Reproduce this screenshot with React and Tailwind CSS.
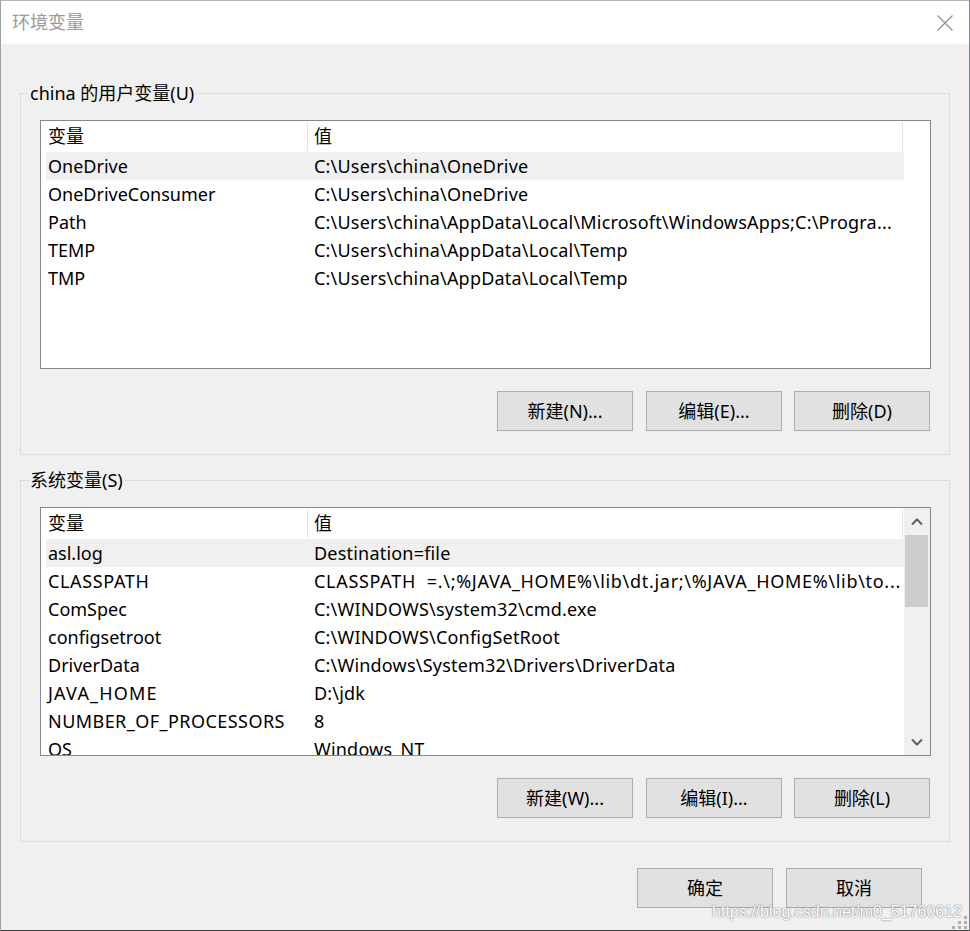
import React from 'react';

// [name, value, name tracking, value tracking]
const userVars = [
  ['OneDrive', 'C:\\Users\\china\\OneDrive'],
  ['OneDriveConsumer', 'C:\\Users\\china\\OneDrive'],
  ['Path', 'C:\\Users\\china\\AppData\\Local\\Microsoft\\WindowsApps;C:\\Progra...'],
  ['TEMP', 'C:\\Users\\china\\AppData\\Local\\Temp'],
  ['TMP', 'C:\\Users\\china\\AppData\\Local\\Temp'],
];

const sysVars = [
  ['asl.log', 'Destination=file'],
  ['CLASSPATH', 'CLASSPATH  =.\\;%JAVA_HOME%\\lib\\dt.jar;\\%JAVA_HOME%\\lib\\to...', 'tracking-[0.65px]', 'tracking-[0.7px]'],
  ['ComSpec', 'C:\\WINDOWS\\system32\\cmd.exe'],
  ['configsetroot', 'C:\\WINDOWS\\ConfigSetRoot'],
  ['DriverData', 'C:\\Windows\\System32\\Drivers\\DriverData'],
  ['JAVA_HOME', 'D:\\jdk', 'tracking-[1.2px]'],
  ['NUMBER_OF_PROCESSORS', '8', 'tracking-[0.45px]'],
  ['OS', 'Windows_NT'],
];

const Chevron = ({ down }) => (
  <svg width="12" height="8" viewBox="0 0 12 8" className="block">
    <path
      d={down ? 'M1 1.5 L6 6.5 L11 1.5' : 'M1 6.5 L6 1.5 L11 6.5'}
      fill="none"
      stroke="#606060"
      strokeWidth="2"
    />
  </svg>
);

const Button = ({ children, className = '' }) => (
  <button className={`w-[136px] h-[40px] border border-[#adadad] bg-[#e1e1e1] text-[18px] text-black ${className}`}>
    {children}
  </button>
);

const VarList = ({ rows, scroll }) => (
  <div className="h-[249px] border border-[#828790] bg-white flex overflow-hidden">
    <div className="w-[863px] shrink-0">
      {/* header */}
      <div className="flex h-[31px]">
        <div className="w-[266px] pl-[7px] flex items-center">变量</div>
        <div className="w-[1px] bg-[#e5e5e5] my-[1px]" />
        <div className="w-[594px] pl-[6px] flex items-center">值</div>
        <div className="w-[1px] bg-[#e5e5e5] my-[1px]" />
      </div>
      {rows.map(([name, value, nameTrack = '', valueTrack = 'tracking-[0.2px]'], i) => (
        <div
          key={name}
          className={`ml-[5px] w-[858px] h-[28px] flex items-center ${i === 0 ? 'bg-[#f0f0f0]' : ''}`}
        >
          <div className={`w-[268px] pl-[2px] whitespace-pre ${nameTrack}`}>{name}</div>
          <div className={`whitespace-pre ${valueTrack}`}>{value}</div>
        </div>
      ))}
    </div>
    {scroll ? (
      <div className="w-[26px] shrink-0 bg-[#f0f0f0] flex flex-col">
        <div className="h-[27px] flex items-center justify-center">
          <Chevron />
        </div>
        <div className="h-[72px] ml-[1px] w-[23px] bg-[#cdcdcd]" />
        <div className="flex-1" />
        <div className="h-[27px] flex items-center justify-center">
          <Chevron down />
        </div>
      </div>
    ) : (
      <div className="w-[26px] shrink-0" />
    )}
  </div>
);

const Group = ({ label, rows, scroll, buttons, className = '' }) => (
  <div className={`relative mx-[19px] border border-[#dcdcdc] pt-[26px] pl-[19px] pr-[18px] pb-[23px] ${className}`}>
    <span className="absolute left-[8px] top-[-13px] bg-[#f0f0f0] px-[1px] leading-[24px]">{label}</span>
    <VarList rows={rows} scroll={scroll} />
    <div className="mt-[22px] flex justify-end pr-[1px]">
      <Button className="mr-[13px]">{buttons[0]}</Button>
      <Button className="mr-[12px]">{buttons[1]}</Button>
      <Button>{buttons[2]}</Button>
    </div>
  </div>
);

export default function App() {
  return (
    <div className="relative w-[970px] h-[931px] flex flex-col border border-t-[#b4b4b4] border-l-[#a0a0a0] border-r-[#7f848b] border-b-[#3c3c3c] bg-[#f0f0f0] text-black text-[18px] font-['Noto_Sans','Noto_Sans_CJK_SC',sans-serif] overflow-hidden">
      {/* title bar */}
      <div className="h-[43px] shrink-0 bg-white flex items-center justify-between pl-[11px] pr-[16px]">
        <span className="text-[#999999] text-[18px]">环境变量</span>
        <svg width="16" height="16" viewBox="0 0 16 16">
          <path d="M0.5 0.5 L15.5 15.5 M15.5 0.5 L0.5 15.5" stroke="#8a8a8a" strokeWidth="1.1" />
        </svg>
      </div>

      <div className="flex-1 flex flex-col">
        <Group
          className="mt-[49px]"
          label="china 的用户变量(U)"
          rows={userVars}
          buttons={['新建(N)...', '编辑(E)...', '删除(D)']}
        />
        <Group
          className="mt-[25px]"
          label="系统变量(S)"
          rows={sysVars}
          scroll
          buttons={['新建(W)...', '编辑(I)...', '删除(L)']}
        />
        <div className="mt-[26px] flex justify-end pr-[47px]">
          <Button className="mr-[13px]">确定</Button>
          <Button>取消</Button>
        </div>
      </div>

      {/* watermark */}
      <div className="absolute right-[7px] bottom-[8px] text-[16px] leading-[20px] text-white font-['Liberation_Sans',sans-serif] [text-shadow:0_0_1px_#777,0_0_2px_#999]">
        https://blog.csdn.net/m0_51760612
      </div>
      <svg className="absolute right-[1px] bottom-[1px]" width="16" height="13" viewBox="0 0 16 13">
        <rect x="12" y="0" width="3" height="3" fill="#b0b0b0" />
        <rect x="6" y="5" width="3" height="3" fill="#b0b0b0" />
        <rect x="12" y="5" width="3" height="3" fill="#b0b0b0" />
        <rect x="0" y="10" width="3" height="3" fill="#b0b0b0" />
        <rect x="6" y="10" width="3" height="3" fill="#b0b0b0" />
        <rect x="12" y="10" width="3" height="3" fill="#b0b0b0" />
      </svg>
    </div>
  );
}
